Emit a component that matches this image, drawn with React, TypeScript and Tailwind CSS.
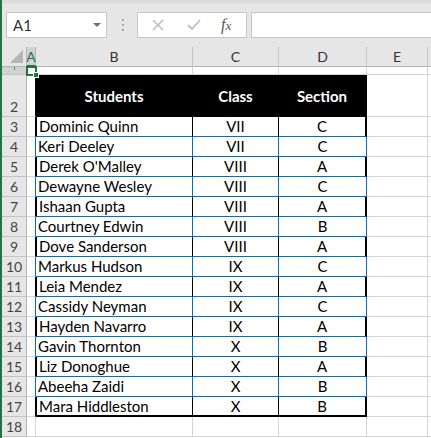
import React from 'react';

const students = [
  ['Dominic Quinn', 'VII', 'C'],
  ['Keri Deeley', 'VII', 'C'],
  ["Derek O'Malley", 'VIII', 'A'],
  ['Dewayne Wesley', 'VIII', 'C'],
  ['Ishaan Gupta', 'VIII', 'A'],
  ['Courtney Edwin', 'VIII', 'B'],
  ['Dove Sanderson', 'VIII', 'A'],
  ['Markus Hudson', 'IX', 'C'],
  ['Leia Mendez', 'IX', 'A'],
  ['Cassidy Neyman', 'IX', 'C'],
  ['Hayden Navarro', 'IX', 'A'],
  ['Gavin Thornton', 'X', 'B'],
  ['Liz Donoghue', 'X', 'A'],
  ['Abeeha Zaidi', 'X', 'B'],
  ['Mara Hiddleston', 'X', 'B'],
];

const grid = 'border-b border-r border-b-[#d4d4d4] border-r-[#d4d4d4]';
const rowHead =
  'flex items-end justify-center bg-[#e6e6e6] border-b border-r border-b-[#c4c4c4] border-r-[#b4b4b4] text-[14px] leading-[19px] text-[#444]';

function RowHeader({ n }: { n: number }) {
  return <div className={rowHead}>{n}</div>;
}

function App() {
  return (
    <div
      className="w-[431px] h-[438px] overflow-hidden bg-white border-l-2 border-[#217346] flex flex-col"
      style={{ fontFamily: 'Lato, "Open Sans", sans-serif' }}
    >
      {/* formula bar */}
      <div className="h-[47px] shrink-0 bg-[#e6e6e6] border-t-[3px] border-[#dcdcdc] flex items-center">
        <div className="ml-[4px] w-[101px] h-[26px] bg-white border border-[#c6c6c6] flex items-center justify-between pl-[6px] pr-[5px]">
          <span className="text-[15px] text-[#333]">A1</span>
          <svg width="8" height="5" viewBox="0 0 8 5">
            <path d="M0 0 L8 0 L4 4 Z" fill="#707070" />
          </svg>
        </div>
        <div className="ml-[15px] w-[2px] flex flex-col gap-[3px]">
          <span className="w-[2px] h-[2px] bg-[#a6a6a6]" />
          <span className="w-[2px] h-[2px] bg-[#a6a6a6]" />
          <span className="w-[2px] h-[2px] bg-[#a6a6a6]" />
        </div>
        <div className="ml-[13px] w-[110px] h-[26px] bg-white border border-[#c6c6c6] flex items-center">
          <svg className="ml-[14px]" width="12" height="12" viewBox="0 0 12 12">
            <path d="M1 1 L11 11 M11 1 L1 11" stroke="#bdbdbd" strokeWidth="1.6" />
          </svg>
          <svg className="ml-[23px]" width="14" height="12" viewBox="0 0 14 12">
            <path d="M1 6 L5 10 L13 1" stroke="#bdbdbd" strokeWidth="1.8" fill="none" />
          </svg>
          <span
            className="ml-[20px] text-[16px] italic text-[#555]"
            style={{ fontFamily: '"Liberation Serif", serif' }}
          >
            f<span className="text-[13px]">x</span>
          </span>
        </div>
        <div className="ml-[4px] flex-1 h-[26px] bg-white border border-[#c6c6c6] border-r-0" />
      </div>

      {/* sheet */}
      <div className="grid grid-cols-[25px_9px_157px_86px_88px_61px_1fr] grid-rows-[20px_8px_42px_repeat(16,20px)] text-[15px] leading-[19px] text-black">
        {/* column headers */}
        <div className="relative bg-[#e6e6e6] border-b border-r border-b-[#b4b4b4] border-r-[#b4b4b4]">
          <svg className="absolute right-[3px] bottom-[3px]" width="13" height="13" viewBox="0 0 13 13">
            <path d="M13 0 L13 13 L0 13 Z" fill="#b4b4b4" />
          </svg>
        </div>
        <div className="flex items-center justify-center bg-[#d2d2d2] border-b-2 border-r border-b-[#217346] border-r-[#b4b4b4] text-[14px] text-[#217346]">
          A
        </div>
        {['B', 'C', 'D', 'E'].map((c) => (
          <div
            key={c}
            className="flex items-center justify-center bg-[#e6e6e6] border-b border-r border-b-[#b4b4b4] border-r-[#c4c4c4] text-[14px] text-[#333]"
          >
            {c}
          </div>
        ))}
        <div className="bg-[#e6e6e6] border-b border-b-[#b4b4b4]" />

        {/* row 1 */}
        <div className="flex justify-center bg-[#d2d2d2] border-b border-r border-b-[#c4c4c4] border-r-[#b4b4b4] overflow-hidden">
          <span className="w-[1px] h-[3px] bg-[#5b7fa8]" />
        </div>
        <div className="relative border-b border-r border-b-[#d4d4d4] border-r-[#d4d4d4]">
          <div className="absolute -left-[1px] -top-[1px] w-[11px] h-[10px] border-2 border-[#217346]" />
          <div className="absolute -right-[4px] -bottom-[4px] w-[6px] h-[6px] bg-[#217346] border border-white" />
        </div>
        <div className={grid} />
        <div className={grid} />
        <div className={grid} />
        <div className={grid} />
        <div className="border-b border-b-[#d4d4d4]" />

        {/* row 2 header */}
        <RowHeader n={2} />
        <div className="border-b border-r border-b-[#d4d4d4] border-r-black" />
        {['Students', 'Class', 'Section'].map((h, i) => (
          <div
            key={h}
            className={`flex items-center justify-center pt-[2px] bg-black text-white font-bold border-b border-b-black ${
              i === 2 ? 'border-r-2 border-r-black' : 'border-r border-r-black'
            }`}
          >
            {h}
          </div>
        ))}
        <div className={grid} />
        <div className="border-b border-b-[#d4d4d4]" />

        {/* data rows */}
        {students.map((s, i) => {
          const dark = i % 2 === 0;
          const last = i === students.length - 1;
          const side = dark ? 'border-r-black' : 'border-r-[#0070c0]';
          const bottom = last ? 'border-b-2 border-b-black' : 'border-b border-b-[#0070c0]';
          return (
            <React.Fragment key={s[0]}>
              <RowHeader n={i + 3} />
              <div className={`border-b border-r border-b-[#d4d4d4] ${side}`} />
              <div className={`flex items-center pl-[2px] border-r ${side} ${bottom} ${dark ? 'border-l border-l-black' : ''}`}>
                {s[0]}
              </div>
              <div className={`flex items-center justify-center border-r ${side} ${bottom}`}>{s[1]}</div>
              <div
                className={`flex items-center justify-center ${
                  dark ? 'border-r-2 border-r-black' : 'border-r border-r-[#0070c0]'
                } ${bottom}`}
              >
                {s[2]}
              </div>
              <div className={grid} />
              <div className="border-b border-b-[#d4d4d4]" />
            </React.Fragment>
          );
        })}

        {/* row 18 */}
        <RowHeader n={18} />
        <div className={grid} />
        <div className={grid} />
        <div className={grid} />
        <div className={grid} />
        <div className={grid} />
        <div className="border-b border-b-[#d4d4d4]" />
      </div>
    </div>
  );
}

export default App;
